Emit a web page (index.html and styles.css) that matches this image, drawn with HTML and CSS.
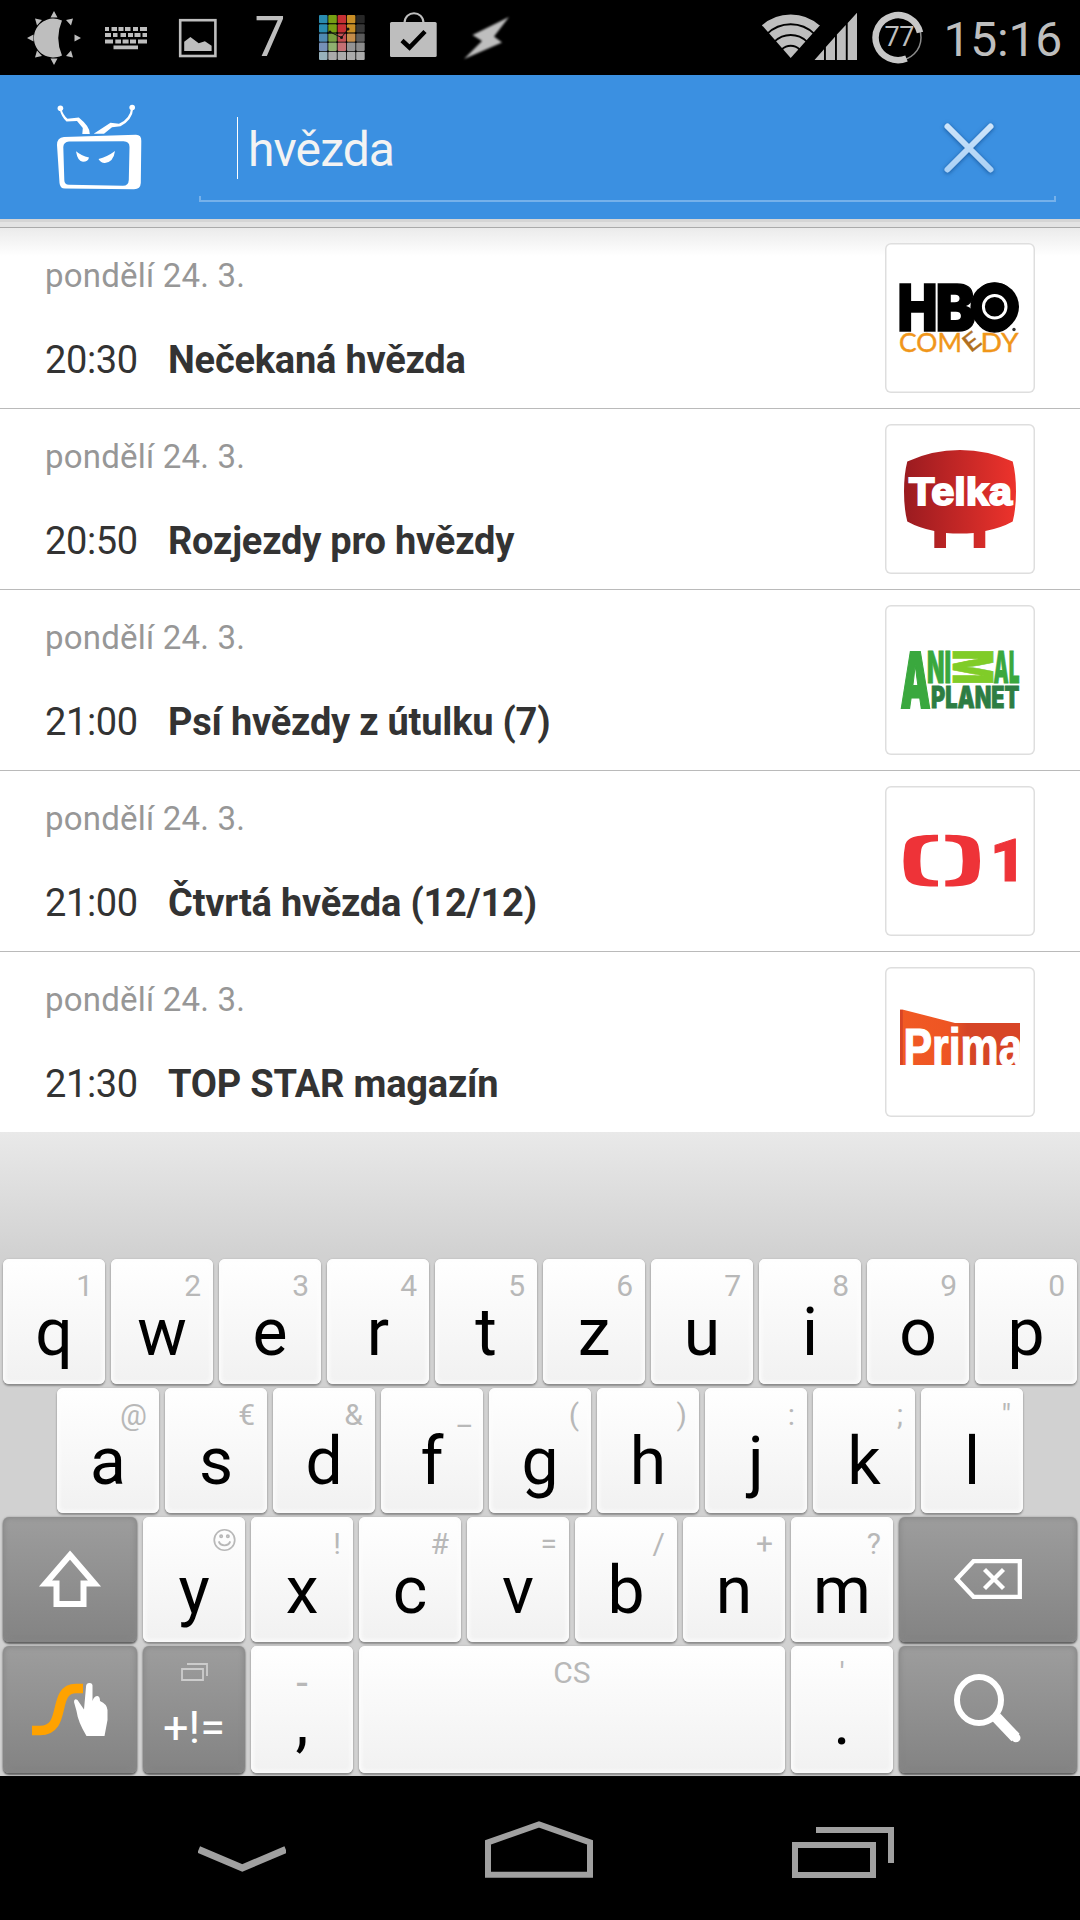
FILE: index.html
```html
<!DOCTYPE html>
<html lang="cs">
<head>
  <meta charset="UTF-8">
  <meta name="viewport" content="width=device-width, initial-scale=1.0">
  <title>TV program</title>
  <link rel="stylesheet" href="styles.css">
</head>
<body>
  <!-- Status bar -->
  <div class="statusbar">
    <svg class="slot" viewBox="0 0 72 75">
      <path d="M44 20.500A19.500 19.500 0 1 0 44 55.500Q36.500 38 44 20.500Z"/>
      <path d="M36 11l3.500 6.500h-7zM36 65l3.500-6.500h-7zM9 38l6.500-3.500v7zM63 38l-6.500-3.500v7zM17 18.500l7 1.500-5 5.500zM55 18.500l-7 1.500 5 5.500zM17 57.500l7-1.500-5-5.500zM55 57.500l-7-1.500 5-5.500z"/>
    </svg>
    <svg class="slot" viewBox="0 0 72 75">
      <path d="M15 27h4v4h-4zM21.500 27h5.500v4h-5.500zM28.500 27h5v4h-5zM35 27h5.500v4H35zM43 27h5v4h-5zM50 27h7v4h-7zM15 33h6v4h-6zM23 33h4.500v4H23zM30.500 33h5.500v4h-5.500zM38 33h5v4h-5zM44.500 33h6v4h-6zM52.500 33h4.500v4h-4.500zM15 39.500h8v4h-8zM25.300 39.500h5.700v4h-5.700zM32.600 39.500h6v4h-6zM40 39.500h6v4h-6zM48 39.500h9v4h-9zM23.500 45.500H48v3.700H23.500z"/>
    </svg>
    <svg class="slot" viewBox="0 0 72 75">
      <rect x="18.200" y="20.200" width="35.200" height="35.800" fill="none" stroke="#bebebe" stroke-width="2.600"/>
      <path d="M22.200 51V41.700L28.400 37l8.300 6.300 6.200-2 6.700 4.400V51z"/>
    </svg>
    <span class="slot seven">7</span>
    <svg class="slot" viewBox="0 0 72 75">
      <g fill="#2a8cb0"><rect x="13" y="15" width="8.500" height="8.300" rx="1"/><rect x="13" y="24.200" width="8.500" height="8.300" rx="1"/></g>
      <rect x="13" y="33.400" width="8.500" height="8.300" rx="1" fill="#4f8ab2"/>
      <rect x="13" y="42.600" width="8.500" height="8.300" rx="1" fill="#7590b8"/>
      <rect x="13" y="51.800" width="8.500" height="8.300" rx="1" fill="#98b2bc"/>
      <g fill="#769f14"><rect x="22.300" y="15" width="8.500" height="8.300" rx="1"/><rect x="22.300" y="24.200" width="8.500" height="8.300" rx="1"/></g>
      <rect x="22.300" y="33.400" width="8.500" height="8.300" rx="1" fill="#78a040"/>
      <rect x="22.300" y="42.600" width="8.500" height="8.300" rx="1" fill="#90b070"/>
      <rect x="22.300" y="51.800" width="8.500" height="8.300" rx="1" fill="#ababab"/>
      <g fill="#c63034"><rect x="31.600" y="15" width="8.500" height="8.300" rx="1"/><rect x="31.600" y="24.200" width="8.500" height="8.300" rx="1"/></g>
      <rect x="31.600" y="33.400" width="8.500" height="8.300" rx="1" fill="#c45053"/>
      <rect x="31.600" y="42.600" width="8.500" height="8.300" rx="1" fill="#c47074"/>
      <rect x="31.600" y="51.800" width="8.500" height="8.300" rx="1" fill="#ababab"/>
      <g fill="#c88e26"><rect x="40.900" y="15" width="8.500" height="8.300" rx="1"/><rect x="40.900" y="24.200" width="8.500" height="8.300" rx="1"/></g>
      <rect x="40.900" y="33.400" width="8.500" height="8.300" rx="1" fill="#c68e4a"/>
      <rect x="40.900" y="42.600" width="8.500" height="8.300" rx="1" fill="#949494"/>
      <rect x="40.900" y="51.800" width="8.500" height="8.300" rx="1" fill="#ababab"/>
      <rect x="50.200" y="15" width="8.500" height="8.300" rx="1" fill="#272727"/>
      <rect x="50.200" y="24.200" width="8.500" height="8.300" rx="1" fill="#383838"/>
      <rect x="50.200" y="33.400" width="8.500" height="8.300" rx="1" fill="#5c5c5c"/>
      <rect x="50.200" y="42.600" width="8.500" height="8.300" rx="1" fill="#8c8c8c"/>
      <rect x="50.200" y="51.800" width="8.500" height="8.300" rx="1" fill="#ababab"/>
      <path d="M24 32l11.500 5.500L42 29" fill="none" stroke="#111" stroke-width="1"/>
      <circle cx="24" cy="32" r="1.500" fill="#111"/><circle cx="35.500" cy="37.500" r="1.500" fill="#111"/><circle cx="42" cy="29" r="1.500" fill="#111"/>
    </svg>
    <svg class="slot" viewBox="0 0 72 75">
      <path d="M26.500 23c0-13 19-13 19 0" fill="none" stroke="#bebebe" stroke-width="2"/>
      <rect x="12" y="22" width="46.700" height="35" rx="1.500"/>
      <path d="M24 40.500l7.500 7 15.500-16" fill="none" stroke="#000" stroke-width="4.500"/>
    </svg>
    <svg class="slot bolt" viewBox="0 0 72 75">
      <path d="M59 17L22.500 35l9.500 6-18 18 38-16.500-8-6z"/>
    </svg>

    <div class="status-right">
      <svg class="wifi" viewBox="760 0 60 75">
        <clipPath id="wedge"><path d="M790.700 58L755 17.400V0h72v17.400z"/></clipPath>
        <g clip-path="url(#wedge)" fill="none" stroke="#bebebe" stroke-width="8.800">
          <circle cx="790.700" cy="58" r="39.100"/>
          <circle cx="790.700" cy="58" r="28.400"/>
          <circle cx="790.700" cy="58" r="17.700"/>
          <circle cx="790.700" cy="58" r="11.300" fill="#bebebe" stroke="none"/>
        </g>
      </svg>
      <svg class="signal" viewBox="814 0 44 75">
        <path d="M814.500 60L824 49.200V60zM825.900 47.100L835 36.700V60h-9.100zM836.900 34.600L845.800 25v35h-8.900zM847.700 23L857 12.700V60h-9.300z"/>
      </svg>
      <svg class="battery" viewBox="872 0 52 75">
        <circle cx="898" cy="37.500" r="23" fill="none" stroke="#8a8a8a" stroke-width="1.500"/>
        <path d="M920 32.500A22.500 22.500 0 1 0 906.500 58.500" fill="none" stroke="#c8c8c8" stroke-width="6.500"/>
        <text x="899.500" y="46" text-anchor="middle" font-size="27" textLength="30">77</text>
      </svg>
      <span class="clock">15:16</span>
    </div>
  </div>

  <!-- Search header -->
  <div class="header">
    <svg class="tv" viewBox="52 100 96 96">
      <path fill-rule="evenodd" d="M64 137L136 134.800Q141.500 134.800 141.300 141L140.800 183Q140.500 189.200 134 189.200L65 188.500Q60 188.500 59.500 183L57 145Q57 137.500 64 137ZM69 141.500Q63.500 142 63.300 147L64.300 180Q64.300 184.500 69 184.800L123 185.800Q128.500 185.800 128.800 180L129.500 147Q129.500 141.500 123.500 141.300Z"/>
      <path d="M76 151.200Q81 155.500 89 157.500 88 161.800 83 161.800 77.500 161.200 76 151.200ZM115 151Q107 157 98.500 159 101 163.200 105 163 113.500 162 115 151Z"/>
      <circle cx="60.400" cy="108.300" r="2.800"/>
      <circle cx="132.200" cy="107.500" r="2.800"/>
      <path d="M59.500 109Q61.500 117 66.500 121.500L77 121 82.800 128 82.300 134H89.800Q90.500 127 78.800 117.500L67.500 118.800Q63 115 61.500 109ZM131.200 108Q130 119 119 123.800L110.500 122.800 93.700 133.700H104L112 127.200 120.500 126.200Q132.500 120 133.300 108Z"/>
    </svg>
    <div class="search">
      <span class="cursor"></span>
      <span class="query">hvězda</span>
      <svg class="clear" viewBox="0 0 60 60">
        <defs>
          <linearGradient id="cross" x1="0" y1="6" x2="0" y2="54" gradientUnits="userSpaceOnUse">
            <stop offset="0" stop-color="#cfe5fa"/>
            <stop offset="1" stop-color="#a9d0f5"/>
          </linearGradient>
        </defs>
        <path d="M8.500 8.500l43 43M51.500 8.500l-43 43" stroke="url(#cross)" stroke-width="6" stroke-linecap="round"/>
      </svg>
    </div>
  </div>
  <div class="header-shadow"></div>

  <!-- Results -->
  <div class="results">
    <div class="result">
      <div class="info">
        <div class="date">pondělí 24. 3.</div>
        <div class="show"><span class="time">20:30</span><span class="name">Nečekaná hvězda</span></div>
      </div>
      <svg class="channel" viewBox="0 0 150 150">
        <g font-family="Inter" font-weight="900" font-size="65" stroke="#000" stroke-width="1.500">
          <text x="12.500" y="87.500" textLength="40" lengthAdjust="spacingAndGlyphs">H</text>
          <text x="50.500" y="87.500" textLength="40" lengthAdjust="spacingAndGlyphs">B</text>
          <text x="87" y="87.500" textLength="45" lengthAdjust="spacingAndGlyphs">O</text>
        </g>
        <circle cx="109.700" cy="63.700" r="24.300"/>
        <circle cx="109.700" cy="63.700" r="11.300" fill="#000" stroke="#fff" stroke-width="3"/>
        <circle cx="129" cy="86.500" r="1.700" fill="#333"/>
        <g font-family="Lato" font-size="26.500" fill="#f0961a" stroke="#f0961a" stroke-width=".4">
          <text x="14" y="109" textLength="63" lengthAdjust="spacingAndGlyphs">COM</text>
          <text x="95.500" y="109" textLength="38" lengthAdjust="spacingAndGlyphs">DY</text>
          <text x="79" y="107" fill="#b06f20" stroke="#b06f20" transform="rotate(-38 87 99)" textLength="16" lengthAdjust="spacingAndGlyphs" font-size="24">E</text>
        </g>
      </svg>
    </div>

    <div class="result">
      <div class="info">
        <div class="date">pondělí 24. 3.</div>
        <div class="show"><span class="time">20:50</span><span class="name">Rozjezdy pro hvězdy</span></div>
      </div>
      <svg class="channel" viewBox="0 0 150 150">
        <defs>
          <linearGradient id="red">
            <stop offset="0" stop-color="#9a1b20"/>
            <stop offset="1" stop-color="#ed332c"/>
          </linearGradient>
        </defs>
        <path fill="url(#red)" d="M22.300 37.500Q47 26 75 26T127.700 37.500Q131 50 131 67.500T127.700 97.500Q116 104 100.300 107V124H88.700V109Q75 110 61 109V124H49.300V107Q34 104 22.300 97.500 19 85 19 67.500T22.300 37.500Z"/>
        <text x="24" y="80.500" fill="#fff" stroke="#fff" stroke-width="2" font-family="Liberation Sans" font-weight="700" font-size="39.500" textLength="103" lengthAdjust="spacingAndGlyphs">Telka</text>
      </svg>
    </div>

    <div class="result">
      <div class="info">
        <div class="date">pondělí 24. 3.</div>
        <div class="show"><span class="time">21:00</span><span class="name">Psí hvězdy z útulku (7)</span></div>
      </div>
      <svg class="channel" viewBox="0 0 150 150">
        <g font-family="Inter" font-weight="900" fill="#3aa83e" stroke="#3aa83e" stroke-width=".8">
          <text x="15.500" y="102.700" font-size="77.500" stroke-width="2" textLength="30" lengthAdjust="spacingAndGlyphs">A</text>
          <text x="42" y="78.300" font-size="44" textLength="24" lengthAdjust="spacingAndGlyphs">NI</text>
          <text x="108.500" y="78.300" font-size="44" textLength="26" lengthAdjust="spacingAndGlyphs">AL</text>
          <text transform="translate(67.500 44.500) rotate(90)" x="0" y="0" font-size="54.500" fill="#80cc28" stroke="#80cc28" textLength="35" lengthAdjust="spacingAndGlyphs">M</text>
          <text x="46" y="102.800" font-size="29.500" fill="#2d7d43" stroke="#2d7d43" textLength="88.500" lengthAdjust="spacingAndGlyphs">PLANET</text>
        </g>
      </svg>
    </div>

    <div class="result">
      <div class="info">
        <div class="date">pondělí 24. 3.</div>
        <div class="show"><span class="time">21:00</span><span class="name">Čtvrtá hvězda (12/12)</span></div>
      </div>
      <svg class="channel" viewBox="0 0 150 150" fill="#ee3338">
        <path d="M53 48.800C30 49 22 51 20 60Q17 75 20 89C22 98 30 100.500 53 100.500V94.500C42 94 37.500 92 36.300 86Q34.500 75 36.300 63.500C37.500 57.500 42 55.500 53 55.200ZM60.300 48.800C83 49 91.500 51 93.500 60Q96.500 75 93.500 89C91.500 98 83 100.500 60.300 100.500V94.500C71 94 76 92 77 86Q78.500 75 77 63.500C76 57.500 71 55.500 60.300 55.200Z"/>
        <text x="105" y="95" font-family="Roboto" font-weight="900" font-size="59" stroke="#ee3338" textLength="36" lengthAdjust="spacingAndGlyphs">1</text>
      </svg>
    </div>

    <div class="result">
      <div class="info">
        <div class="date">pondělí 24. 3.</div>
        <div class="show"><span class="time">21:30</span><span class="name">TOP STAR magazín</span></div>
      </div>
      <svg class="channel" viewBox="0 0 150 150">
        <defs>
          <linearGradient id="orange">
            <stop offset="0" stop-color="#f15a24"/>
            <stop offset=".4" stop-color="#ee5523"/>
            <stop offset=".56" stop-color="#d54526"/>
            <stop offset="1" stop-color="#d84526"/>
          </linearGradient>
        </defs>
        <path fill="url(#orange)" d="M15 42.800H18.300L70 55.900H135V97.900H15Z"/>
        <path fill="#d84526" d="M15 42.800h2.800v55.100H15z"/>
        <text x="18.500" y="97.900" fill="#fff" stroke="#fff" stroke-width="1.200" font-family="Liberation Sans" font-weight="700" font-size="51" textLength="119" lengthAdjust="spacingAndGlyphs">Prima</text>
      </svg>
    </div>
  </div>

  <!-- Keyboard -->
  <div class="keyboard">
    <div class="keys">
      <div class="key"><i>1</i><b>q</b></div>
      <div class="key"><i>2</i><b>w</b></div>
      <div class="key"><i>3</i><b>e</b></div>
      <div class="key"><i>4</i><b>r</b></div>
      <div class="key"><i>5</i><b>t</b></div>
      <div class="key"><i>6</i><b>z</b></div>
      <div class="key"><i>7</i><b>u</b></div>
      <div class="key"><i>8</i><b>i</b></div>
      <div class="key"><i>9</i><b>o</b></div>
      <div class="key"><i>0</i><b>p</b></div>
    </div>
    <div class="keys middle">
      <div class="key"><i>@</i><b>a</b></div>
      <div class="key"><i>€</i><b>s</b></div>
      <div class="key"><i>&amp;</i><b>d</b></div>
      <div class="key"><i>_</i><b>f</b></div>
      <div class="key"><i>(</i><b>g</b></div>
      <div class="key"><i>)</i><b>h</b></div>
      <div class="key"><i>:</i><b>j</b></div>
      <div class="key"><i>;</i><b>k</b></div>
      <div class="key"><i>"</i><b>l</b></div>
    </div>
    <div class="keys">
      <div class="key dark side">
        <svg width="64" height="60" viewBox="0 0 64 60">
          <path d="M32 5L56.500 33.500H45.500V54H18.500V33.500H7.500Z" fill="none" stroke="#fff" stroke-width="6"/>
        </svg>
      </div>
      <div class="key">
        <svg class="smile" viewBox="0 0 24 24" fill="none" stroke="#b8b8b8" stroke-width="1.800">
          <circle cx="12" cy="12" r="10.700"/>
          <path d="M6 13.500c2 5.500 10 5.500 12 0" stroke-width="2"/>
          <circle cx="8.500" cy="8.200" r="1.200"/><circle cx="15.500" cy="8.200" r="1.200"/>
        </svg>
        <b>y</b>
      </div>
      <div class="key"><i>!</i><b>x</b></div>
      <div class="key"><i>#</i><b>c</b></div>
      <div class="key"><i>=</i><b>v</b></div>
      <div class="key"><i>/</i><b>b</b></div>
      <div class="key"><i>+</i><b>n</b></div>
      <div class="key"><i>?</i><b>m</b></div>
      <div class="key dark wide">
        <svg class="delete" width="68" height="40" viewBox="0 0 68 40" fill="none" stroke="#fff" stroke-width="4.300">
          <path d="M19.500 2.200H65.800V37.800H19.500L2.800 20Z"/>
          <path d="M30.500 10.500l19 19M49.500 10.500l-19 19"/>
        </svg>
      </div>
    </div>
    <div class="keys bottom">
      <div class="key dark side">
        <svg width="76" height="53" viewBox="0 0 76 53">
          <path d="M0 47.500H8C36 47.500 19 5.500 44 5.500H51" fill="none" stroke="#ffa200" stroke-width="9.500"/>
          <path fill="#fff" d="M54 4Q54 0 57.500 0T60.500 4V18Q62 13 65.500 13 68 13.500 68 18 75 21 75.500 27V37L72.500 53H54.500Q46 39 44.500 28L42 19Q42 15 45.500 17L52 26.500Z"/>
        </svg>
      </div>
      <div class="key dark symbols">
        <svg width="27" height="18" viewBox="0 0 27 18" fill="none" stroke="#ccc" stroke-width="1.800">
          <path d="M1 6H22V17H1ZM6 1H26V13"/>
        </svg>
        <b>+!=</b>
      </div>
      <div class="key centered"><i class="dash">-</i><b>,</b></div>
      <div class="key centered space"><i>CS</i></div>
      <div class="key centered"><i>'</i><b>.</b></div>
      <div class="key dark wide">
        <svg class="find" width="68" height="70" viewBox="0 0 68 70" fill="none" stroke="#fff">
          <ellipse cx="25" cy="26" rx="22" ry="23" stroke-width="6"/>
          <path d="M42.500 43.500L61.500 63.500" stroke-width="11"/>
          <path d="M42.500 43.500L62 63.800" stroke-width="9" stroke-linecap="round"/>
        </svg>
      </div>
    </div>
  </div>

  <!-- Navigation bar -->
  <div class="navbar">
    <svg width="88" height="60" viewBox="198 1820 88 60">
      <path d="M198.700 1849.500L242.300 1868 285.800 1849.500" fill="none" stroke="#a0a0a0" stroke-width="7"/>
    </svg>
    <svg width="108" height="60" viewBox="486 1820 108 60">
      <path d="M489 1874.800V1842.300L540 1824.500 591 1842.300V1874.800Z" fill="none" stroke="#a0a0a0" stroke-width="6"/>
    </svg>
    <svg width="102" height="60" viewBox="792 1820 102 60">
      <path d="M795 1845H873V1875H795ZM816 1830H891V1863" fill="none" stroke="#a0a0a0" stroke-width="6"/>
    </svg>
  </div>
</body>
</html>
```
FILE: styles.css
```css
body {
  margin: 0;
  width: 1080px;
  height: 1920px;
  overflow: hidden;
  font-family: Roboto, "Liberation Sans", sans-serif;
  background-color: #fff;
}

svg {
  display: block;
  flex-shrink: 0;
}

/* Status bar */
.statusbar {
  display: flex;
  height: 75px;
  padding-left: 18px;
  background-color: #000;
  color: #bebebe;
  fill: #bebebe;
}

.slot {
  width: 72px;
  height: 75px;
}

.seven {
  font-size: 55px;
  line-height: 75px;
  text-align: center;
}

.bolt {
  filter: blur(0.8px);
}

.status-right {
  display: flex;
  margin-left: auto;
  padding-right: 18px;
}

.wifi {
  width: 60px;
  height: 75px;
  margin-right: -6px;
}

.signal {
  width: 44px;
  height: 75px;
  margin-right: 14px;
}

.battery {
  width: 52px;
  height: 75px;
}

.clock {
  width: 120px;
  margin-left: 18px;
  font-size: 48px;
  line-height: 79px;
  letter-spacing: -0.2px;
  text-align: right;
}

/* Header */
.header {
  display: flex;
  height: 144px;
  box-sizing: border-box;
  padding: 25px 24px 17px 52px;
  background-color: #3b90e1;
}

.tv {
  width: 96px;
  height: 96px;
  fill: #fff;
}

.search {
  display: flex;
  flex: 1;
  align-items: flex-start;
  margin-left: 51px;
  padding: 17px 57px 0 38px;
  background:
    linear-gradient(#76b1ea, #76b1ea) left bottom / 2px 6px no-repeat,
    linear-gradient(#76b1ea, #76b1ea) right bottom / 2px 6px no-repeat,
    linear-gradient(#76b1ea, #76b1ea) left bottom / 100% 2px no-repeat;
}

.cursor {
  width: 1px;
  height: 62px;
  background-color: #fff;
}

.query {
  flex: 1;
  margin-left: 10px;
  font-size: 48px;
  line-height: 66px;
  letter-spacing: -0.9px;
  color: #f3f3f3;
}

.clear {
  width: 60px;
  height: 60px;
  margin-top: 1px;
  filter: drop-shadow(0 1px 2px rgba(0, 50, 110, 0.6));
}

.header-shadow {
  height: 9px;
  box-sizing: border-box;
  border-top: 3px solid #d5d5d5;
  border-bottom: 1px solid #aaa;
  background-color: #e3e3e3;
}

/* Results */
.results {
  height: 904px;
}

.result {
  display: flex;
  height: 180px;
  justify-content: space-between;
  align-items: center;
  padding: 0 45px;
  border-bottom: 1px solid #bababa;
}

.result:first-child {
  background: linear-gradient(#ebebeb, #fff 28px);
}

.result:last-child {
  border-bottom: none;
}

.info {
  height: 180px;
  padding-top: 28px;
  box-sizing: border-box;
}

.date {
  font-size: 33px;
  line-height: 40px;
  letter-spacing: 0.2px;
  color: #979797;
}

.show {
  display: flex;
  margin-top: 41px;
  font-size: 38px;
  line-height: 47px;
  color: #333;
}

.time {
  width: 123px;
  letter-spacing: -0.4px;
}

.name {
  font-weight: 700;
  letter-spacing: -0.22px;
}

.channel {
  width: 150px;
  height: 150px;
  box-sizing: border-box;
  border-radius: 6px;
  background-color: #fff;
  box-shadow: inset 0 0 0 1.5px #dedede;
}

/* Keyboard */
.keyboard {
  display: flex;
  flex-direction: column;
  gap: 4px;
  height: 644px;
  box-sizing: border-box;
  padding: 127px 3px 0;
  background: linear-gradient(#e9e9e9, #d1d1d1 124px);
}

.keys {
  display: flex;
  gap: 6px;
  height: 125px;
}

.middle {
  padding: 0 54px;
}

.bottom {
  height: 127px;
}

.key {
  display: flex;
  flex-direction: column;
  width: 102px;
  box-sizing: border-box;
  padding-top: 12px;
  border-radius: 6px;
  background: linear-gradient(#fff, #f1f1f1);
  box-shadow: 0 2px 2px #8c8c8c, 0 0 2px #b0b0b0, inset 0 0 4px 2px #fdfdfd;
}

.key i {
  padding-right: 12px;
  font-style: normal;
  font-size: 30px;
  line-height: 30px;
  text-align: right;
  color: #b8b8b8;
}

.key b {
  font-weight: 400;
  font-size: 66px;
  line-height: 64px;
  text-align: center;
  color: #000;
}

.centered i {
  padding-right: 0;
  text-align: center;
}

.centered b {
  margin-top: 2px;
}

.key .dash {
  margin-bottom: -20px;
  font-size: 42px;
  line-height: 50px;
}

.space {
  width: 426px;
}

.dark {
  align-items: center;
  justify-content: center;
  padding-top: 0;
  background: linear-gradient(#9d9d9d, #838383);
  box-shadow: 0 2px 2px #606060, 0 0 2px #909090, inset 0 0 5px 1px #868686;
}

.side {
  width: 134px;
}

.wide {
  width: 178px;
}

.delete,
.find {
  margin-bottom: 2px;
}

.smile {
  width: 23px;
  height: 24px;
  margin: -1px 9px 7px auto;
}

.symbols {
  justify-content: flex-start;
  padding-top: 17px;
}

.symbols b {
  margin-top: 15px;
  font-size: 45px;
  color: #fff;
}

/* Navigation bar */
.navbar {
  display: flex;
  gap: 199px;
  height: 144px;
  box-sizing: border-box;
  padding: 44px 0 0 198px;
  background-color: #000;
}
```
